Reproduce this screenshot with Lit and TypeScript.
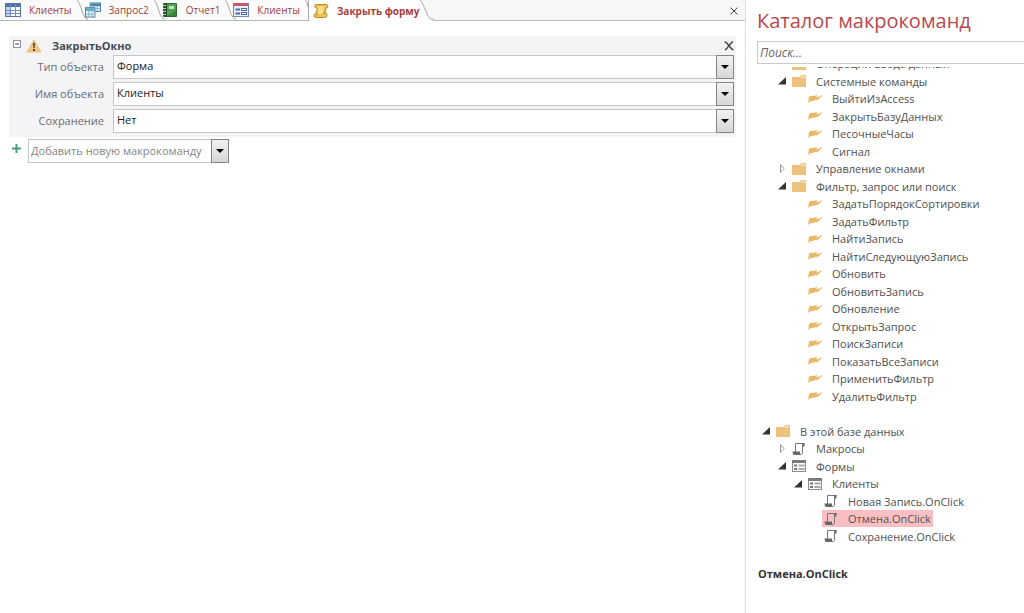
import { LitElement, html, css, svg, nothing } from "lit";
import { customElement, property, state } from "lit/decorators.js";
import { classMap } from "lit/directives/class-map.js";

const tableIcon = html`<svg width="16" height="16" viewBox="0 0 16 16" aria-hidden="true">
  <rect x="0.5" y="1.5" width="15" height="13" fill="#fff" stroke="#5577a8" />
  <rect x="1" y="2" width="14" height="3" fill="#4f74ae" />
  <path d="M1 5H5V14H1Z" fill="#c5d4ec" />
  <path d="M1 8.5H15M1 11.5H15M5.5 2V14M10.5 2V14" stroke="#6f8fbf" />
</svg>`;

const queryIcon = html`<svg width="16" height="16" viewBox="0 0 17 16" aria-hidden="true">
  <rect x="5.5" y="0.5" width="11" height="9" fill="#e6f1f8" stroke="#4a7c9c" />
  <rect x="6" y="1" width="10" height="3" fill="#3f87ad" />
  <path d="M9.500 4V9M13 4V9M6 6.500H16" stroke="#86b3cc" />
  <rect x="0.500" y="5.500" width="10" height="10" fill="#e6f1f8" stroke="#4a7c9c" />
  <rect x="1" y="6" width="9" height="3" fill="#5bb0c8" />
  <path d="M4 9V15M7.500 9V15M1 12.500H10" stroke="#86b3cc" />
</svg>`;

const reportIcon = html`<svg width="16" height="16" viewBox="0 0 16 16" aria-hidden="true">
  <path d="M1.500 1.500H14.500V14.500H1.500Z" fill="#55a052" stroke="#2d6b30" />
  <path d="M2 1H5V15H2Z" fill="#24502a" />
  <path d="M1 3.500H4M1 6.500H4M1 9.500H4M1 12.500H4" stroke="#b9ceb9" />
  <path d="M7 4H12V7H7Z" fill="#c6e6b8" />
  <path d="M5 14L14 8V14Z" fill="#3b853c" />
</svg>`;

const formTabIcon = html`<svg width="16" height="16" viewBox="0 0 16 16" aria-hidden="true">
  <rect x="0.500" y="1.500" width="15" height="13" fill="#e9eefa" stroke="#7286b4" />
  <rect x="1" y="1" width="14" height="3" fill="#c9566b" />
  <path d="M2.500 7.500H7M2.500 11.500H7" stroke="#4d69a8" stroke-width="2" />
  <rect x="8.500" y="6.500" width="5" height="2" fill="#fff" stroke="#4d69a8" />
  <rect x="8.500" y="10.500" width="5" height="2" fill="#fff" stroke="#4d69a8" />
</svg>`;

const scrollIcon = html`<svg width="16" height="16" viewBox="0 0 16 16" aria-hidden="true">
  <path d="M3 1.500H13Q15.500 2 15 4Q14.500 5 13 5L12 10Q14.500 10.500 14 12.500Q13.500 14.500 11.500 14.500H2.500Q0.500 14 1 12Q1.500 10.500 3 10.500L4.500 5Q2 5.500 1.500 3.500Q1.500 2 3 1.500Z"
    fill="#f1c550" stroke="#b98a30" />
  <path d="M4.500 3.500H11L9.500 11H5.500Z" fill="#f9df8c" />
  <path d="M3 10.500Q5 12 4 13M12 10.500H10" fill="none" stroke="#b98a30" />
</svg>`;

const warningIcon = html`<svg width="16" height="14" viewBox="0 0 16 14" aria-hidden="true">
  <path d="M8 1L15 13H1Z" fill="#efc68a" stroke="#e9bd7e" stroke-linejoin="round" />
  <path d="M7 4H9L8.500 9H7.500ZM7 10H9V12H7Z" fill="#4a3c2c" />
</svg>`;

const treeIcons: Record<string, unknown> = {
  folder: svg`<path d="M0 3H8L9 1H14V13H0Z" fill="#ecc27c" /><path d="M9 3H13.500" stroke="#fff3dc" />`,
  action: svg`<path d="M1 5Q3 3 5 4L9 3L8.500 5.500L15 3L8.500 9V7.500L5 9Q2 8.500 0 11Z" fill="#ebb867" />`,
  macro: svg`<path d="M3.500 10V1.500H12.500M10.500 2V11.500Q10 12.500 8 12.500" fill="none" stroke="#777" />
    <path d="M0.500 9.500H8V13H2Q0.500 12.500 0.500 9.500Z" fill="#686868" /><path d="M10 1H12.500V4.500H11Z" fill="#686868" />`,
  form: svg`<rect x="0.500" y="1.500" width="13" height="11" fill="#fff" stroke="#8a8a8a" />
    <path d="M0 1H14V4H0Z" fill="#7c7c7c" />
    <path d="M2 6.500H5M2 10H5" stroke="#777" stroke-width="2" />
    <path d="M6.500 6.500H12.500M6.500 10H12.500" stroke="#aaa" stroke-width="2" />`,
};

interface Node {
  label: string;
  level: number;
  icon: string;
  open?: boolean;
  gap?: boolean;
}

const action = (label: string): Node => ({ label, level: 2, icon: "action" });

const nodes: Node[] = [
  { label: "Операции ввода данных", level: 1, icon: "folder" },
  { label: "Системные команды", level: 1, icon: "folder", open: true },
  ...["ВыйтиИзAccess", "ЗакрытьБазуДанных", "ПесочныеЧасы", "Сигнал"].map(action),
  { label: "Управление окнами", level: 1, icon: "folder", open: false },
  { label: "Фильтр, запрос или поиск", level: 1, icon: "folder", open: true },
  ...[
    "ЗадатьПорядокСортировки",
    "ЗадатьФильтр",
    "НайтиЗапись",
    "НайтиСледующуюЗапись",
    "Обновить",
    "ОбновитьЗапись",
    "Обновление",
    "ОткрытьЗапрос",
    "ПоискЗаписи",
    "ПоказатьВсеЗаписи",
    "ПрименитьФильтр",
    "УдалитьФильтр",
  ].map(action),
  { label: "", level: 0, icon: "", gap: true },
  { label: "В этой базе данных", level: 0, icon: "folder", open: true },
  { label: "Макросы", level: 1, icon: "macro", open: false },
  { label: "Формы", level: 1, icon: "form", open: true },
  { label: "Клиенты", level: 2, icon: "form", open: true },
  { label: "Новая Запись.OnClick", level: 3, icon: "macro" },
  { label: "Отмена.OnClick", level: 3, icon: "macro" },
  { label: "Сохранение.OnClick", level: 3, icon: "macro" },
];

const tabs = [
  { label: "Клиенты", icon: tableIcon },
  { label: "Запрос2", icon: queryIcon },
  { label: "Отчет1", icon: reportIcon },
  { label: "Клиенты", icon: formTabIcon },
  { label: "Закрыть форму", icon: scrollIcon },
];

@customElement("combo-box")
class ComboBox extends LitElement {
  @property() label = "";
  @property() value = "";
  @property({ type: Boolean }) muted = false;

  static styles = css`
    :host {
      display: grid;
      height: 24px;
    }
    select,
    .arrow {
      grid-area: 1 / 1;
    }
    select {
      appearance: none;
      min-width: 0;
      width: 100%;
      height: 24px;
      margin: 0;
      padding: 0 18px 3px 3px;
      border: 1px solid #c6c6c9;
      border-radius: 0;
      background: #fff;
      color: #222;
      font: 11px "Open Sans", "Noto Sans", sans-serif;
    }
    select.muted {
      padding-left: 2px;
      padding-bottom: 1px;
      color: #858585;
    }
    .arrow {
      justify-self: end;
      box-sizing: border-box;
      width: 18px;
      height: 24px;
      display: grid;
      place-items: center;
      border: 1px solid #858585;
      background: linear-gradient(#f2f2f2, #d6d6d6);
      pointer-events: none;
    }
  `;

  render() {
    return html`<select class=${classMap({ muted: this.muted })} aria-label=${this.label}>
        <option>${this.value}</option>
      </select>
      <span class="arrow">
        <svg width="8" height="4" viewBox="0 0 8 4" aria-hidden="true"><path d="M0 0H8L4 4Z" fill="#000" /></svg>
      </span>`;
  }
}

@customElement("macro-editor")
class MacroEditor extends LitElement {
  static styles = css`
    :host {
      display: block;
      padding: 15px 9px 0 9px;
    }
    button {
      display: grid;
      place-items: center;
      padding: 0;
      border: 0;
      background: none;
    }
    .action {
      padding: 0 2px 4px 0;
      background: #f4f4f6;
    }
    header {
      display: flex;
      align-items: center;
      height: 19px;
      padding-left: 4px;
    }
    header .fold {
      margin-right: 5px;
      align-self: start;
      padding-top: 4px;
    }
    h2 {
      flex: 1;
      margin: 0 0 0 10px;
      color: #444b55;
      font-size: 11px;
      line-height: 18px;
    }
    .fields {
      display: grid;
      grid-template-columns: 95px 1fr;
      column-gap: 9px;
      row-gap: 3px;
      align-items: center;
    }
    .fields span {
      padding-bottom: 2px;
      color: #6a6d73;
      text-align: right;
    }
    .add {
      display: flex;
      align-items: center;
      gap: 7px;
      padding-top: 2px;
      padding-left: 3px;
    }
    .add button {
      align-self: start;
      padding-top: 5px;
    }
    .add combo-box {
      width: 201px;
    }
  `;

  render() {
    const fields = [
      ["Тип объекта", "Форма"],
      ["Имя объекта", "Клиенты"],
      ["Сохранение", "Нет"],
    ];
    return html`<section class="action">
        <header>
          <button class="fold" aria-label="Свернуть">
            <svg width="8" height="8" viewBox="0 0 8 8">
              <rect x="0.500" y="0.500" width="7" height="7" fill="#fff" stroke="#8f9399" />
              <path d="M2 4H6" stroke="#444" />
            </svg>
          </button>
          ${warningIcon}
          <h2>ЗакрытьОкно</h2>
          <button aria-label="Удалить">
            <svg width="10" height="10" viewBox="0 0 10 10">
              <path d="M0.500 1Q2 0.500 4.500 4Q7 8 9.500 9M9 0.500Q6 3 4.500 5Q3 8 1 9" fill="none" stroke="#484848" stroke-width="1.500" />
            </svg>
          </button>
        </header>
        <div class="fields">
          ${fields.map(
            ([label, value]) => html`<span>${label}</span><combo-box label=${label} value=${value}></combo-box>`,
          )}
        </div>
      </section>
      <div class="add">
        <button aria-label="Добавить">
          <svg width="9" height="9" viewBox="0 0 9 9"><path d="M4.500 0V9M0 4.500H9" stroke="#4ba07c" stroke-width="2" /></svg>
        </button>
        <combo-box muted label="Новая макрокоманда" value="Добавить новую макрокоманду"></combo-box>
      </div>`;
  }
}

@customElement("action-catalog")
class ActionCatalog extends LitElement {
  @state() private selected = "Отмена.OnClick";

  static styles = css`
    :host {
      display: flex;
      flex-direction: column;
      min-width: 0;
      color: #505050;
    }
    h1 {
      margin: 7px 0 6px 11px;
      color: #b8484c;
      font-size: 20px;
      font-weight: 400;
      line-height: 28px;
      white-space: nowrap;
    }
    input {
      box-sizing: border-box;
      height: 23px;
      margin-left: 11px;
      padding: 0 2px 1px;
      border: 1px solid #c9c9c9;
      border-right: 0;
      border-radius: 0;
      color: #444;
      font: italic 12px "Open Sans", "Noto Sans", sans-serif;
    }
    input::placeholder {
      color: #666;
      opacity: 1;
    }
    .viewport {
      margin-top: 3px;
      overflow: hidden;
    }
    ul {
      margin: -12px 0 0;
      padding: 0 0 0 16px;
      list-style: none;
    }
    li {
      display: flex;
      align-items: center;
      height: 17px;
    }
    li:nth-child(even) {
      height: 18px;
    }
    .level-1 {
      padding-left: 16px;
    }
    .level-2 {
      padding-left: 32px;
    }
    .level-3 {
      padding-left: 48px;
    }
    .twisty {
      flex: none;
      width: 12px;
      height: 12px;
    }
    button {
      display: flex;
      align-items: center;
      gap: 9px;
      height: 100%;
      padding: 0 2px;
      border: 0;
      background: none;
      color: inherit;
      font: inherit;
      white-space: nowrap;
    }
    button svg {
      flex: none;
    }
    button.selected {
      background: #fbbfc3;
    }
    footer {
      margin: 20px 0 0 12px;
      color: #333;
      font-weight: 700;
      line-height: 18px;
    }
  `;

  private twisty(node: Node) {
    if (node.open === undefined) return nothing;
    return node.open
      ? svg`<path d="M8 2V9.500H0Z" fill="#333" />`
      : svg`<path d="M2.500 1.500V9.500L6 5.500Z" fill="#fff" stroke="#999" />`;
  }

  render() {
    return html`<h1>Каталог макрокоманд</h1>
      <input type="search" placeholder="Поиск..." aria-label="Поиск" />
      <div class="viewport">
        <ul>
          ${nodes.map((node) =>
            node.gap
              ? html`<li></li>`
              : html`<li class="level-${node.level}">
                  <svg class="twisty" viewBox="0 0 12 12" aria-hidden="true">${this.twisty(node)}</svg>
                  <button
                    class=${classMap({ selected: node.label === this.selected })}
                    @click=${() => (this.selected = node.label)}
                  >
                    <svg width="15" height="14" viewBox="0 0 15 14" aria-hidden="true">${treeIcons[node.icon]}</svg>
                    ${node.label}
                  </button>
                </li>`,
          )}
        </ul>
      </div>
      <footer>${this.selected}</footer>`;
  }
}

@customElement("app-root")
class AppRoot extends LitElement {
  static styles = css`
    :host {
      display: grid;
      grid-template-columns: minmax(0, 1fr) 278px;
      min-height: 100vh;
      overflow: hidden;
      background: #fff;
      font: 11px/17px "Open Sans", "Noto Sans", sans-serif;
    }
    main {
      border-right: 1px solid #dedede;
    }
    nav {
      display: flex;
      height: 20px;
      border-bottom: 1px solid #b9b9b9;
      background: #f7f7f7;
    }
    .tab {
      position: relative;
      display: flex;
      align-items: center;
      gap: 8px;
      padding: 0 8px 0 5px;
      border: 0;
      background: #fbfbfb;
      color: #a33c40;
      font: 10px "Open Sans", "Noto Sans", sans-serif;
      white-space: nowrap;
    }
    .tab svg {
      flex: none;
    }
    .tab.active {
      height: 21px;
      padding: 0 2px 0 4px;
      border-left: 1px solid #aaa;
      background: #fff;
      font-weight: 700;
    }
    .edge {
      position: absolute;
      z-index: 1;
      top: 0;
      right: -8px;
    }
    .tab.active .edge {
      right: -13px;
    }
    .close {
      margin-left: auto;
      padding: 0 7px;
      border: 0;
      background: none;
    }
  `;

  private edge(index: number) {
    if (index === tabs.length - 1) {
      return html`<svg class="edge" width="14" height="21" viewBox="0 0 14 21" aria-hidden="true">
        <path d="M0 0Q2 1 4 7L8 16Q10 20.500 14 20.500V21H0Z" fill="#fff" />
        <path d="M0 0Q2 1 4 7L8 16Q10 20 14 19.500" fill="none" stroke="#aaa" />
      </svg>`;
    }
    const last = index === tabs.length - 2;
    return html`<svg class="edge" width="11" height="20" viewBox="0 0 11 20" aria-hidden="true">
      <path d=${last ? "M0 0Q2 1 3 7" : "M0 0Q2 1 4 8L6 14Q8 19 11 19.500"} fill="none" stroke="#aaa" />
    </svg>`;
  }

  render() {
    return html`<main>
        <nav>
          ${tabs.map(
            (tab, i) => html`<button class=${classMap({ tab: true, active: i === tabs.length - 1 })}>
              ${tab.icon}<span>${tab.label}</span>${this.edge(i)}
            </button>`,
          )}
          <button class="close" aria-label="Закрыть">
            <svg width="8" height="8" viewBox="0 0 8 8"><path d="M0.500 0.500L7.500 7.500M7.500 0.500L0.500 7.500" stroke="#444" /></svg>
          </button>
        </nav>
        <macro-editor></macro-editor>
      </main>
      <action-catalog></action-catalog>`;
  }
}
